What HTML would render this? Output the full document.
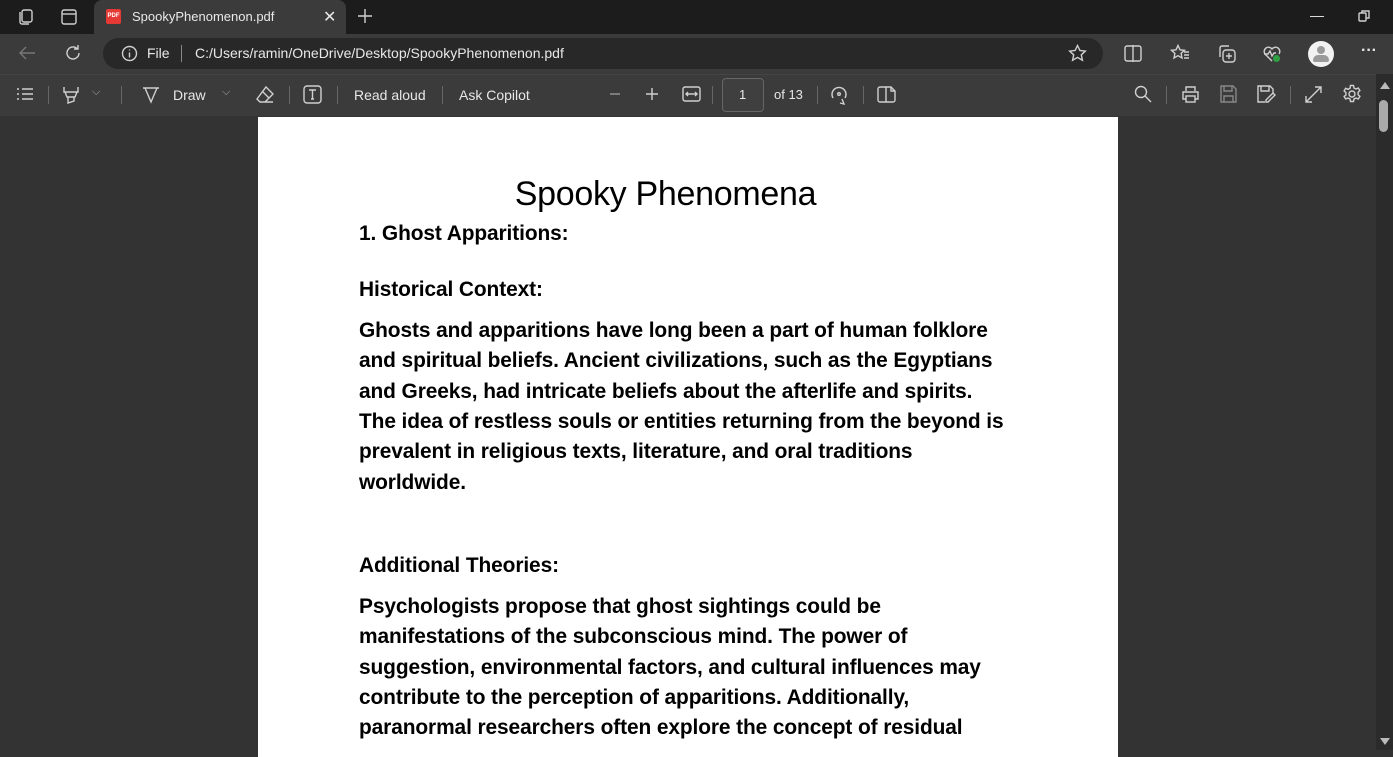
<!DOCTYPE html>
<html><head><meta charset="utf-8"><style>
*{margin:0;padding:0;box-sizing:border-box}
body{width:1393px;height:750px;overflow:hidden;background:#333;font-family:"Liberation Sans",sans-serif;position:relative;color:#fff}
.abs{position:absolute}
.tb{top:0;left:0;width:1393px;height:34px;background:#1c1c1c}
.tab{left:94px;top:0;width:252px;height:34px;background:#3b3b3b;border-radius:8px 8px 0 0}
.nav{top:34px;left:0;width:1393px;height:40px;background:#3b3b3b}
.addr{left:103px;top:38px;width:1000px;height:31px;background:#282828;border-radius:16px}
.pdfbar{top:74px;left:0;width:1393px;height:42px;background:#3b3b3b;border-top:1px solid #444}
.t{font-size:14px;color:#e8e8e8;white-space:nowrap}
.sep{width:1px;height:18px;background:#666;top:86px}
.page{left:258px;top:117px;width:860px;height:640px;background:#fff;color:#000}
.page .l{position:absolute;left:101px;font-weight:bold;font-size:20.9px;white-space:nowrap;letter-spacing:-0.1px}
svg{position:absolute;fill:none;stroke:#d0d0d0;stroke-width:1.4}
</style></head><body>
<div class="abs tb"></div>
<div class="abs tab"></div>
<svg style="left:16px;top:8px" width="18" height="18" viewBox="0 0 18 18"><rect x="6" y="2" width="10" height="12" rx="2"/><path d="M4 4v10a2 2 0 0 0 2 2h7"/></svg>
<svg style="left:61px;top:9px" width="16" height="16" viewBox="0 0 16 16"><rect x="1" y="1" width="14" height="14" rx="2"/><path d="M1 5h14"/></svg>
<div class="abs" style="left:106px;top:9px;width:15px;height:15px;background:#e53935;border-radius:2px;font-size:6px;font-weight:bold;color:#fff;text-align:center;line-height:15px">PDF</div>
<div class="abs t" style="left:132px;top:9px;font-size:13px">SpookyPhenomenon.pdf</div>
<div class="abs t" style="left:323px;top:7px;font-size:16px">✕</div>
<svg style="left:357px;top:8px" width="16" height="16" viewBox="0 0 16 16"><path d="M8 1v14M1 8h14"/></svg>
<div class="abs t" style="left:1310px;top:7px">—</div>
<svg style="left:1358px;top:10px" width="12" height="12" viewBox="0 0 12 12"><rect x="1" y="3" width="7" height="8" rx="1"/><path d="M4 3V1h7v7H8"/></svg>
<div class="abs nav"></div>
<svg style="left:18px;top:45px" width="18" height="16" viewBox="0 0 18 16"><path d="M17 8H2M8 2L2 8l6 6" stroke="#777"/></svg>
<svg style="left:64px;top:44px" width="18" height="18" viewBox="0 0 18 18"><path d="M15 9a6 6 0 1 1-2-4.5M14 1v4h-4"/></svg>
<div class="abs addr"></div>
<svg style="left:121px;top:45px" width="17" height="17" viewBox="0 0 17 17"><circle cx="8.5" cy="8.5" r="7"/><path d="M8.5 7.5v5M8.5 4.5v1"/></svg>
<div class="abs t" style="left:147px;top:45px">File</div>
<div class="abs" style="left:181px;top:45px;width:1px;height:17px;background:#888"></div>
<div class="abs t" style="left:195px;top:45px">C:/Users/ramin/OneDrive/Desktop/SpookyPhenomenon.pdf</div>
<svg style="left:1068px;top:44px" width="19" height="19" viewBox="0 0 19 19"><path d="M9.5 1.5l2.4 5 5.4.6-4 3.7 1.1 5.4-4.9-2.8-4.9 2.8 1.1-5.4-4-3.7 5.4-.6z"/></svg>
<svg style="left:1124px;top:45px" width="18" height="17" viewBox="0 0 18 17"><rect x="1" y="1" width="16" height="15" rx="2"/><path d="M9 0v17"/></svg>
<svg style="left:1170px;top:44px" width="20" height="18" viewBox="0 0 20 18"><path d="M8 1.5l2 4.3 4.5.5-3.4 3.1.9 4.6L8 11.7l-4 2.3.9-4.6L1.5 6.3 6 5.8z M14 8h5M14 11h5M14 14h5"/></svg>
<svg style="left:1217px;top:44px" width="20" height="20" viewBox="0 0 20 20"><path d="M3 13V4a2 2 0 0 1 2-2h7"/><rect x="6" y="6" width="12" height="12" rx="3"/><path d="M12 9v6M9 12h6"/></svg>
<svg style="left:1262px;top:44px" width="20" height="20" viewBox="0 0 20 20"><path d="M10 17L3 10a4 4 0 0 1 7-5 4 4 0 0 1 7 5M2 10h4l2-3 2 5 2-3h2"/></svg>
<div class="abs" style="left:1273px;top:55px;width:7px;height:7px;border-radius:50%;background:#2ea043"></div>
<div class="abs" style="left:1308px;top:41px;width:26px;height:26px;border-radius:50%;background:#f2f2f2"></div>
<div class="abs" style="left:1317px;top:46px;width:8px;height:8px;border-radius:50%;background:#9a9a9a"></div>
<div class="abs" style="left:1313px;top:55px;width:16px;height:7px;border-radius:8px 8px 3px 3px;background:#9a9a9a"></div>
<div class="abs t" style="left:1361px;top:42px;font-size:16px;font-weight:bold">···</div>
<div class="abs pdfbar"></div>
<svg style="left:16px;top:87px" width="18" height="14" viewBox="0 0 18 14"><path d="M1 2h2M6 2h11M1 7h2M6 7h11M1 12h2M6 12h11"/></svg>
<div class="abs sep" style="left:48px"></div>
<svg style="left:62px;top:85px" width="18" height="20" viewBox="0 0 18 20"><path d="M2 2v5h14V2M3 7l2 5h8l2-5M6 12v6l6-2v-4"/></svg>
<div class="abs t" style="left:92px;top:86px;font-size:11px;color:#aaa">⌵</div>
<div class="abs sep" style="left:121px"></div>
<svg style="left:142px;top:85px" width="18" height="20" viewBox="0 0 18 20"><path d="M1 3h16M3 3l6 14 6-14"/></svg>
<div class="abs t" style="left:173px;top:87px">Draw</div>
<div class="abs t" style="left:222px;top:86px;font-size:11px;color:#aaa">⌵</div>
<svg style="left:255px;top:85px" width="20" height="20" viewBox="0 0 20 20"><path d="M11 2l7 7-8 8H5l-3-3zM6 17h12M7 6l7 7"/></svg>
<div class="abs sep" style="left:289px"></div>
<svg style="left:303px;top:85px" width="19" height="19" viewBox="0 0 19 19"><rect x="1" y="1" width="17" height="17" rx="3"/><path d="M6 5h7M9.5 5v9M8 14h3"/></svg>
<div class="abs sep" style="left:337px"></div>
<div class="abs t" style="left:354px;top:87px">Read aloud</div>
<div class="abs sep" style="left:442px"></div>
<div class="abs t" style="left:459px;top:87px">Ask Copilot</div>
<svg style="left:608px;top:87px" width="14" height="14" viewBox="0 0 14 14"><path d="M2 7h10" stroke="#999"/></svg>
<svg style="left:645px;top:87px" width="14" height="14" viewBox="0 0 14 14"><path d="M1 7h12M7 1v12"/></svg>
<svg style="left:682px;top:86px" width="19" height="16" viewBox="0 0 19 16"><rect x="1" y="1" width="17" height="14" rx="2"/><path d="M4 8h11M6 6l-2 2 2 2M13 6l2 2-2 2"/></svg>
<div class="abs sep" style="left:712px"></div>
<div class="abs" style="left:722px;top:78px;width:42px;height:34px;border:1px solid #666;border-radius:4px;background:#3f3f3f"></div>
<div class="abs t" style="left:739px;top:87px;font-size:13px">1</div>
<div class="abs t" style="left:774px;top:87px;font-size:13px">of 13</div>
<div class="abs sep" style="left:817px"></div>
<svg style="left:829px;top:84px" width="20" height="22" viewBox="0 0 20 22"><path d="M4 14a7 7 0 1 1 12 0M13 15l2 5-4-1"/><circle cx="10" cy="10" r="1.3"/></svg>
<div class="abs sep" style="left:863px"></div>
<svg style="left:877px;top:86px" width="19" height="17" viewBox="0 0 19 17"><path d="M9 1H3a2 2 0 0 0-2 2v11a2 2 0 0 0 2 2h6zM9 1h5l4 4v9a2 2 0 0 1-2 2H9M14 1v4h4"/></svg>
<svg style="left:1134px;top:85px" width="18" height="18" viewBox="0 0 18 18"><circle cx="7" cy="7" r="5.5"/><path d="M11 11l6 6"/></svg>
<div class="abs sep" style="left:1166px"></div>
<svg style="left:1181px;top:85px" width="19" height="19" viewBox="0 0 19 19"><path d="M5 6V2h9v4M5 14H2V7h15v7h-3"/><rect x="5" y="11" width="9" height="6"/></svg>
<svg style="left:1220px;top:85px" width="17" height="18" viewBox="0 0 17 18"><path d="M1 1h12l3 3v13H1zM4 1v5h8V1M4 17v-6h9v6" stroke="#888"/></svg>
<svg style="left:1257px;top:85px" width="19" height="19" viewBox="0 0 19 19"><path d="M8 17H1V1h12l3 3v4M4 1v5h8V1M18 10l-7 7h-2v-2l7-7z"/></svg>
<div class="abs sep" style="left:1290px"></div>
<svg style="left:1304px;top:85px" width="19" height="19" viewBox="0 0 19 19"><path d="M2 17L17 2M11 2h6v6M2 11v6h6"/></svg>
<svg style="left:1342px;top:84px" width="20" height="20" viewBox="0 0 20 20"><circle cx="10" cy="10" r="3"/><path d="M8.5 1.5h3l.5 2.5 2 1 2.3-1 1.6 2.6-1.8 1.7v2.4l1.8 1.7-1.6 2.6-2.3-1-2 1-.5 2.5h-3l-.5-2.5-2-1-2.3 1-1.6-2.6L3.9 11V8.6L2.1 6.9l1.6-2.6 2.3 1 2-1z"/></svg>
<div class="abs" style="left:1376px;top:74px;width:17px;height:676px;background:#2b2b2b"></div>
<div class="abs" style="left:1380px;top:82px;width:0;height:0;border-left:5px solid transparent;border-right:5px solid transparent;border-bottom:7px solid #bbb"></div>
<div class="abs" style="left:1379px;top:100px;width:9px;height:32px;border-radius:5px;background:#aaa"></div>
<div class="abs" style="left:1380px;top:738px;width:0;height:0;border-left:5px solid transparent;border-right:5px solid transparent;border-top:7px solid #bbb"></div>
<div class="abs page">
<div style="position:absolute;left:0;width:815px;text-align:center;top:58px;font-size:34px;font-weight:300;letter-spacing:-0.3px">Spooky Phenomena</div>
<div class="l" style="top:105px">1. Ghost Apparitions:</div>
<div class="l" style="top:161px">Historical Context:</div>
<div class="l" style="top:202px">Ghosts and apparitions have long been a part of human folklore</div>
<div class="l" style="top:232px">and spiritual beliefs. Ancient civilizations, such as the Egyptians</div>
<div class="l" style="top:263px">and Greeks, had intricate beliefs about the afterlife and spirits.</div>
<div class="l" style="top:293px">The idea of restless souls or entities returning from the beyond is</div>
<div class="l" style="top:323px">prevalent in religious texts, literature, and oral traditions</div>
<div class="l" style="top:354px">worldwide.</div>
<div class="l" style="top:437px">Additional Theories:</div>
<div class="l" style="top:478px">Psychologists propose that ghost sightings could be</div>
<div class="l" style="top:508px">manifestations of the subconscious mind. The power of</div>
<div class="l" style="top:539px">suggestion, environmental factors, and cultural influences may</div>
<div class="l" style="top:569px">contribute to the perception of apparitions. Additionally,</div>
<div class="l" style="top:599px">paranormal researchers often explore the concept of residual</div>
</div>
</body></html>
